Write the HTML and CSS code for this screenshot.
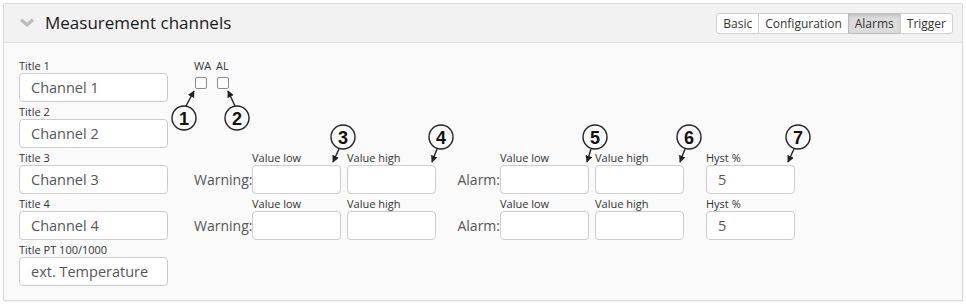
FILE: index.html
```html
<!DOCTYPE html>
<html>
<head>
<meta charset="utf-8">
<link rel="stylesheet" href="styles.css">
</head>
<body>
<div class="panel">
  <div class="panel-head">
    <svg class="chev" viewBox="0 0 16 9" width="16" height="9"><polyline points="2,1.8 8,6.8 14,1.8" fill="none" stroke="#bdbdbd" stroke-width="3.4" stroke-linejoin="miter"/></svg>
    <h2 class="title">Measurement channels</h2>
    <div class="tabs">
      <button class="tab">Basic</button>
      <button class="tab">Configuration</button>
      <button class="tab active">Alarms</button>
      <button class="tab">Trigger</button>
    </div>
  </div>
  <div class="panel-body">
    <div class="row">
      <div class="field title-field"><label>Title 1</label><input class="input" value="Channel 1"></div>
      <div class="checks">
        <div class="check"><span>WA</span><input type="checkbox" class="cb"></div>
        <div class="check"><span>AL</span><input type="checkbox" class="cb"></div>
      </div>
    </div>
    <div class="row">
      <div class="field title-field"><label>Title 2</label><input class="input" value="Channel 2"></div>
    </div>
    <div class="row">
      <div class="field title-field"><label>Title 3</label><input class="input" value="Channel 3"></div>
      <div class="alarms">
        <span class="caption warn">Warning:</span>
        <div class="field val-field"><label>Value low</label><input class="input"></div>
        <div class="field val-field"><label>Value high</label><input class="input"></div>
        <span class="caption alarm">Alarm:</span>
        <div class="field val-field"><label>Value low</label><input class="input"></div>
        <div class="field val-field"><label>Value high</label><input class="input"></div>
        <div class="field val-field hyst"><label>Hyst %</label><input class="input" value="5"></div>
      </div>
    </div>
    <div class="row">
      <div class="field title-field"><label>Title 4</label><input class="input" value="Channel 4"></div>
      <div class="alarms">
        <span class="caption warn">Warning:</span>
        <div class="field val-field"><label>Value low</label><input class="input"></div>
        <div class="field val-field"><label>Value high</label><input class="input"></div>
        <span class="caption alarm">Alarm:</span>
        <div class="field val-field"><label>Value low</label><input class="input"></div>
        <div class="field val-field"><label>Value high</label><input class="input"></div>
        <div class="field val-field hyst"><label>Hyst %</label><input class="input" value="5"></div>
      </div>
    </div>
    <div class="row">
      <div class="field title-field"><label>Title PT 100/1000</label><input class="input" value="ext. Temperature"></div>
    </div>
  </div>
</div>
<svg class="annot" width="966" height="305" viewBox="0 0 966 305">
  <defs>
    <marker id="ah" viewBox="0 0 10 10" refX="9" refY="5" markerWidth="5" markerHeight="5" orient="auto" markerUnits="strokeWidth">
      <path d="M0,0 L10,5 L0,10 Z" fill="#222"/>
    </marker>
  </defs>
  <g stroke="#222" stroke-width="1.4" fill="none" marker-end="url(#ah)">
    <line x1="186" y1="106" x2="194" y2="91"/>
    <line x1="235" y1="106" x2="228" y2="91"/>
    <line x1="339" y1="149" x2="333" y2="162"/>
    <line x1="437" y1="149" x2="432" y2="162"/>
    <line x1="591" y1="149" x2="587" y2="162"/>
    <line x1="685" y1="149" x2="680" y2="162"/>
    <line x1="794" y1="149" x2="788" y2="162"/>
  </g>
  <g stroke="#222" stroke-width="1.4" fill="#fafafa">
    <circle cx="184" cy="118" r="12"/>
    <circle cx="237" cy="118" r="12"/>
    <circle cx="343" cy="137" r="12"/>
    <circle cx="441" cy="137" r="12"/>
    <circle cx="595" cy="137" r="12"/>
    <circle cx="689" cy="137" r="12"/>
    <circle cx="798" cy="137" r="12"/>
  </g>
  <g class="num" text-anchor="middle">
    <text x="184" y="124.5">1</text>
    <text x="237" y="124.5">2</text>
    <text x="343" y="143.5">3</text>
    <text x="441" y="143.5">4</text>
    <text x="595" y="143.5">5</text>
    <text x="689" y="143.5">6</text>
    <text x="798" y="143.5">7</text>
  </g>
</svg>
</body>
</html>
```
FILE: styles.css
```css
body {
  margin: 0;
  font-family: "Open Sans", "Noto Sans", sans-serif;
  background: #fff;
}

.panel {
  margin: 3px;
  width: 960px;
  box-sizing: border-box;
  border: 1px solid #d9d9d9;
  border-radius: 2px;
  background: #fafafa;
  box-shadow: 0 1px 2px rgba(0, 0, 0, 0.08);
  display: flex;
  flex-direction: column;
}

.panel-head {
  flex-shrink: 0;
  height: 39px;
  box-sizing: border-box;
  border-bottom: 1px solid #dedede;
  background: #f2f2f2;
  display: flex;
  align-items: center;
  padding: 0 9px 0 15px;
}

.chev {
  display: block;
  margin-right: 10px;
  margin-top: -1px;
}

.title {
  flex: 1;
  margin: 0 0 2px 0;
  font-size: 17px;
  font-weight: 400;
  color: #1a1a1a;
}

.tabs {
  display: flex;
}

.tab {
  font-family: "Open Sans", sans-serif;
  font-size: 12px;
  height: 21px;
  padding: 0 6px;
  border: 1px solid #cfcfcf;
  background: #fff;
  color: #333;
  margin-left: -1px;
  line-height: 19px;
}

.tab:first-child {
  border-radius: 3px 0 0 3px;
}

.tab:last-child {
  border-radius: 0 3px 3px 0;
}

.tab.active {
  background: #dcdcdc;
  border-color: #bdbdbd;
  box-shadow: inset 0 2px 3px rgba(0, 0, 0, 0.12);
}

.panel-body {
  padding: 16px 15px 14px;
  display: flex;
  flex-direction: column;
  gap: 3px;
}

.row {
  display: flex;
  align-items: flex-start;
}

.field {
  display: flex;
  flex-direction: column;
}

.field label,
.check span {
  font-size: 11px;
  line-height: 14px;
  height: 14px;
  color: #333;
  white-space: nowrap;
}

.input {
  height: 29px;
  box-sizing: border-box;
  border: 1px solid #ccc;
  border-radius: 4px;
  background: #fff;
  padding: 0 11px;
  font-family: "Open Sans", sans-serif;
  font-size: 14.5px;
  color: #555;
  margin: 0;
}

.title-field .input {
  width: 149px;
}

.checks {
  margin-left: 26px;
  display: flex;
}

.check {
  width: 22px;
  display: flex;
  flex-direction: column;
}

.cb {
  appearance: none;
  -webkit-appearance: none;
  width: 12px;
  height: 12px;
  margin: 4px 0 0 1px;
  border: 1px solid #8a8a8a;
  border-radius: 2px;
  background: #fff;
}

.alarms {
  margin-left: 26px;
  display: flex;
  align-items: flex-end;
}

.caption {
  font-size: 14px;
  line-height: 29px;
  color: #555;
  text-align: right;
  white-space: nowrap;
}

.caption.warn {
  width: 58px;
}

.caption.alarm {
  width: 64px;
}

.val-field .input {
  width: 89px;
}

.val-field + .val-field {
  margin-left: 6px;
}

.val-field.hyst {
  margin-left: 22px;
}

.annot {
  position: absolute;
  top: 0;
  left: 0;
  pointer-events: none;
}

.num text {
  font-family: "Liberation Sans", Arial, sans-serif;
  font-weight: 700;
  font-size: 18px;
  fill: #111;
}
```
